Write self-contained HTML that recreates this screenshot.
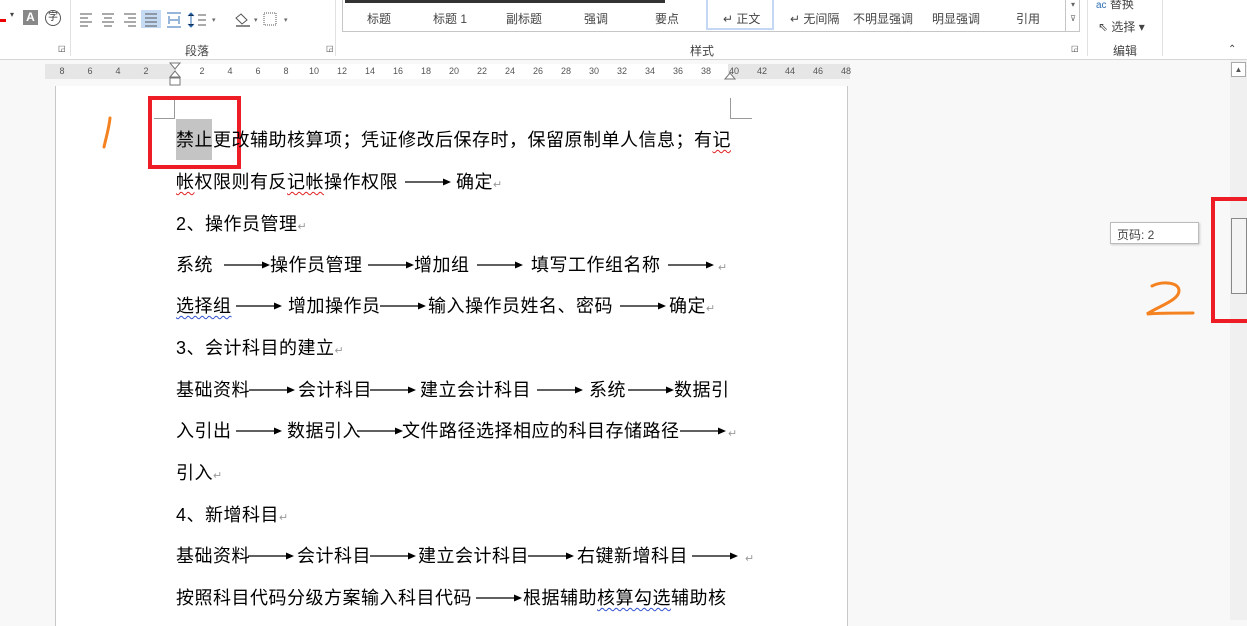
<!DOCTYPE html>
<html><head><meta charset="utf-8"><style>
*{margin:0;padding:0;box-sizing:border-box}
body{width:1247px;height:620px;overflow:hidden;background:#f8f8f8;position:relative;font-family:"Liberation Sans","Noto Sans CJK SC",sans-serif;color:#000}
.ab{position:absolute}
.rib{position:absolute;left:0;top:0;width:1247px;height:60px;background:#fff;border-bottom:1px solid #d5d5d5}
.rt{position:absolute;font-size:12px;color:#444;white-space:nowrap}
.vs{position:absolute;top:0;width:1px;height:56px;background:#e1e1e1}
.t{position:absolute;font-size:18px;line-height:20px;letter-spacing:0.5px;white-space:nowrap;font-family:"Liberation Sans","Noto Sans CJK SC",sans-serif}
.r{font-size:11px;color:#999;letter-spacing:0}
.wv{text-decoration:underline wavy #e02020;text-decoration-thickness:1px;text-underline-offset:3px}
.wb{text-decoration:underline wavy #3050d0;text-decoration-thickness:1px;text-underline-offset:3px}
.ru{position:absolute;top:66px;font-size:9px;color:#555;width:20px;text-align:center;margin-left:-10px}
</style></head><body>
<div class="rib">
  <div class="ab" style="left:0;top:8px;width:6px;height:14px;border-bottom:3px solid #e00"></div>
  <div class="rt" style="left:10px;top:10px;font-size:8px">▾</div>
  <div class="ab" style="left:23px;top:10px;width:15px;height:15px;background:#888;color:#fff;font-size:12px;text-align:center;line-height:15px;font-weight:bold">A</div>
  <div class="ab" style="left:45px;top:10px;width:16px;height:16px;border:1px solid #555;border-radius:50%;font-size:10px;text-align:center;line-height:14px;color:#333">字</div>
  <div class="vs" style="left:70px"></div>
  <svg class="ab" style="left:78px;top:10px" width="230" height="18" viewBox="0 0 230 18" stroke="#555" stroke-width="1">
    <path d="M2 4h12M2 8h8M2 12h12M2 16h8"/>
    <path d="M24 4h12M26 8h8M24 12h12M26 16h8"/>
    <path d="M46 4h12M50 8h8M46 12h12M50 16h8"/>
    <rect x="63" y="-2" width="20" height="22" fill="#c5daf3" stroke="none"/>
    <path d="M67 4h12M67 8h12M67 12h12M67 16h12"/>
    <path d="M89 3h14M89 17h14M91 6v8M101 6v8M92 10h8" stroke="#2f6fb5"/>
    <path d="M113 4v12M110 6l3-3 3 3M110 14l3 3 3-3" stroke="#2f6fb5"/><path d="M120 5h8M120 10h8M120 15h8"/>
    <text x="134" y="12" font-size="7" fill="#666" stroke="none">▾</text>
    <path d="M163 4l6 6-5 4-6-6z" fill="none"/><path d="M158 16h14" stroke="#888" stroke-width="2"/>
    <text x="176" y="12" font-size="7" fill="#666" stroke="none">▾</text>
    <rect x="186" y="3" width="12" height="12" stroke-dasharray="1 1" fill="none"/>
    <text x="206" y="12" font-size="7" fill="#666" stroke="none">▾</text>
  </svg>
  <div class="rt" style="left:185px;top:42px">段落</div>
  <div class="rt" style="left:58px;top:44px;font-size:8px">◲</div>
  <div class="rt" style="left:326px;top:44px;font-size:8px">◲</div>
  <div class="vs" style="left:335px"></div>
  <div class="ab" style="left:342px;top:-2px;width:738px;height:34px;border:1px solid #c6c6c6;border-top:none"></div>
  <div class="ab" style="left:345px;top:0;width:320px;height:3px;background:#333"></div>
  <div class="ab" style="left:706px;top:-2px;width:68px;height:32px;border:2px solid #c5d8f3;border-top:none"></div>
  <div class="rt" style="left:367px;top:10px">标题</div>
  <div class="rt" style="left:433px;top:10px">标题 1</div>
  <div class="rt" style="left:506px;top:10px">副标题</div>
  <div class="rt" style="left:584px;top:10px">强调</div>
  <div class="rt" style="left:655px;top:10px">要点</div>
  <div class="rt" style="left:723px;top:10px">↵ 正文</div>
  <div class="rt" style="left:790px;top:10px">↵ 无间隔</div>
  <div class="rt" style="left:853px;top:10px">不明显强调</div>
  <div class="rt" style="left:932px;top:10px">明显强调</div>
  <div class="rt" style="left:1016px;top:10px">引用</div>
  <div class="ab" style="left:1065px;top:-2px;width:15px;height:34px;border-left:1px solid #c6c6c6;font-size:8px;color:#666;text-align:center;line-height:14px">▾<br>⊽</div>
  <div class="rt" style="left:690px;top:42px">样式</div>
  <div class="rt" style="left:1071px;top:44px;font-size:8px">◲</div>
  <div class="vs" style="left:1087px"></div>
  <div class="rt" style="left:1096px;top:-5px"><span style="color:#2f6fb5;font-size:10px">ac</span> 替换</div>
  <div class="rt" style="left:1098px;top:18px">⇖ 选择 ▾</div>
  <div class="rt" style="left:1113px;top:42px">编辑</div>
  <div class="vs" style="left:1162px"></div>
  <div class="rt" style="left:1228px;top:44px;font-size:10px">⌃</div>
</div>
<!-- ruler -->
<div class="ab" style="left:45px;top:64px;width:805px;height:15px;background:#e6e6e6"></div>
<div class="ab" style="left:176px;top:64px;width:552px;height:15px;background:#fff"></div>
<div class="ru" style="left:62px">8</div><div class="ru" style="left:90px">6</div><div class="ru" style="left:118px">4</div><div class="ru" style="left:146px">2</div>
<div class="ru" style="left:202px">2</div><div class="ru" style="left:230px">4</div><div class="ru" style="left:258px">6</div><div class="ru" style="left:286px">8</div><div class="ru" style="left:314px">10</div><div class="ru" style="left:342px">12</div><div class="ru" style="left:370px">14</div><div class="ru" style="left:398px">16</div><div class="ru" style="left:426px">18</div><div class="ru" style="left:454px">20</div><div class="ru" style="left:482px">22</div><div class="ru" style="left:510px">24</div><div class="ru" style="left:538px">26</div><div class="ru" style="left:566px">28</div><div class="ru" style="left:594px">30</div><div class="ru" style="left:622px">32</div><div class="ru" style="left:650px">34</div><div class="ru" style="left:678px">36</div><div class="ru" style="left:706px">38</div><div class="ru" style="left:734px">40</div><div class="ru" style="left:762px">42</div><div class="ru" style="left:790px">44</div><div class="ru" style="left:818px">46</div><div class="ru" style="left:846px">48</div>
<svg class="ab" style="left:168px;top:62px" width="16" height="24"><path d="M2 1h10l-5 6zM7 9l-5 6h10z" fill="#fff" stroke="#777"/><rect x="2" y="16" width="10" height="7" fill="#fff" stroke="#777"/></svg>
<svg class="ab" style="left:724px;top:70px" width="12" height="10"><path d="M1 9l5-6 5 6z" fill="#fff" stroke="#777"/></svg>
<!-- page -->
<div class="ab" style="left:55px;top:86px;width:793px;height:540px;background:#fff;border-left:1px solid #c8c8c8;border-right:1px solid #c8c8c8"></div>
<div class="ab" style="left:154px;top:98px;width:21px;height:21px;border-right:1px solid #999;border-bottom:1px solid #999"></div>
<div class="ab" style="left:730px;top:98px;width:22px;height:21px;border-left:1px solid #999;border-bottom:1px solid #999"></div>
<div class="ab" style="left:176px;top:119px;width:36px;height:41px;background:#c4c4c4"></div>
<!-- scrollbar -->
<div class="ab" style="left:1230px;top:60px;width:17px;height:560px;background:#f0f0f0"></div>
<div class="ab" style="left:1231px;top:62px;width:15px;height:15px;border:1px solid #aaa;background:#fff;font-size:8px;text-align:center;line-height:13px;color:#555">▲</div>
<div class="ab" style="left:1231px;top:218px;width:16px;height:76px;border:1px solid #888;background:#f4f4f4"></div>
<div class="ab" style="left:1110px;top:222px;width:89px;height:22px;border:1px solid #bbb;background:#fff;box-shadow:1px 1px 2px #ccc;font-size:12px;color:#444;padding:3px 6px">页码: 2</div>
<!-- annotations -->
<div class="ab" style="left:148px;top:96px;width:93px;height:73px;border:4px solid #ee1c24"></div>
<div class="ab" style="left:1211px;top:197px;width:40px;height:126px;border:4px solid #ee1c24"></div>
<svg class="ab" style="left:95px;top:110px" width="30" height="45"><path d="M15 8c-1 10-4 20-6 29" stroke="#f58220" stroke-width="3" fill="none" stroke-linecap="round"/></svg>
<svg class="ab" style="left:1130px;top:270px" width="70" height="50"><path d="M22 16c10-5 26-4 27 4 1 10-20 16-32 24 12-1 30-1 46-1" stroke="#f58220" stroke-width="3" fill="none" stroke-linecap="round"/></svg>
<!-- text -->
<svg width="0" height="0" style="position:absolute"><defs><g id="arw"><path d="M0 5H40" stroke="#000" stroke-width="1.2"/><path d="M38 1.5l8 3.5-8 3.5z" fill="#000"/></g></defs></svg>
<div class="t" style="left:176px;top:130px">禁止更改辅助核算项；凭证修改后保存时，保留原制单人信息；有<span class="wv">记</span></div>
<div class="t" style="left:176px;top:172px"><span class="wv">帐</span>权限则有反<span class="wv">记帐</span>操作权限</div>
<div class="t" style="left:456px;top:172px">确定<span class="r">↵</span></div>
<div class="t" style="left:176px;top:214px">2、操作员管理<span class="r">↵</span></div>
<div class="t" style="left:176px;top:255px">系统</div><div class="t" style="left:270px;top:255px">操作员管理</div><div class="t" style="left:414px;top:255px">增加组</div><div class="t" style="left:531px;top:255px">填写工作组名称</div><div class="t" style="left:718px;top:255px"><span class="r">↵</span></div>
<div class="t" style="left:176px;top:296px"><span class="wb">选择组</span></div><div class="t" style="left:288px;top:296px">增加操作员</div><div class="t" style="left:428px;top:296px">输入操作员姓名、密码</div><div class="t" style="left:669px;top:296px">确定<span class="r">↵</span></div>
<div class="t" style="left:176px;top:338px">3、会计科目的建立<span class="r">↵</span></div>
<div class="t" style="left:176px;top:380px">基础资料</div><div class="t" style="left:298px;top:380px">会计科目</div><div class="t" style="left:420px;top:380px">建立会计科目</div><div class="t" style="left:589px;top:380px">系统</div><div class="t" style="left:674px;top:380px">数据引</div>
<div class="t" style="left:176px;top:421px">入引出</div><div class="t" style="left:287px;top:421px">数据引入</div><div class="t" style="left:402px;top:421px">文件路径选择相应的科目存储路径</div><div class="t" style="left:728px;top:421px"><span class="r">↵</span></div>
<div class="t" style="left:176px;top:463px">引入<span class="r">↵</span></div>
<div class="t" style="left:176px;top:505px">4、新增科目<span class="r">↵</span></div>
<div class="t" style="left:176px;top:546px">基础资料</div><div class="t" style="left:297px;top:546px">会计科目</div><div class="t" style="left:418px;top:546px">建立会计科目</div><div class="t" style="left:577px;top:546px">右键新增科目</div><div class="t" style="left:745px;top:546px"><span class="r">↵</span></div>
<div class="t" style="left:176px;top:588px">按照科目代码分级方案输入科目代码</div><div class="t" style="left:523px;top:588px">根据辅助<span class="wb">核算勾选</span>辅助核</div>
<svg class="ab" style="left:0;top:0" width="848" height="620">
<use href="#arw" x="405" y="177"/>
<use href="#arw" x="224" y="260"/><use href="#arw" x="368" y="260"/><use href="#arw" x="477" y="260"/><use href="#arw" x="668" y="260"/>
<use href="#arw" x="236" y="301"/><use href="#arw" x="380" y="301"/><use href="#arw" x="620" y="301"/>
<use href="#arw" x="249" y="385"/><use href="#arw" x="370" y="385"/><use href="#arw" x="537" y="385"/><use href="#arw" x="628" y="385"/>
<use href="#arw" x="236" y="426"/><use href="#arw" x="357" y="426"/><use href="#arw" x="680" y="426"/>
<use href="#arw" x="248" y="551"/><use href="#arw" x="370" y="551"/><use href="#arw" x="528" y="551"/><use href="#arw" x="692" y="551"/>
<use href="#arw" x="476" y="593"/>
</svg>
</body></html>
